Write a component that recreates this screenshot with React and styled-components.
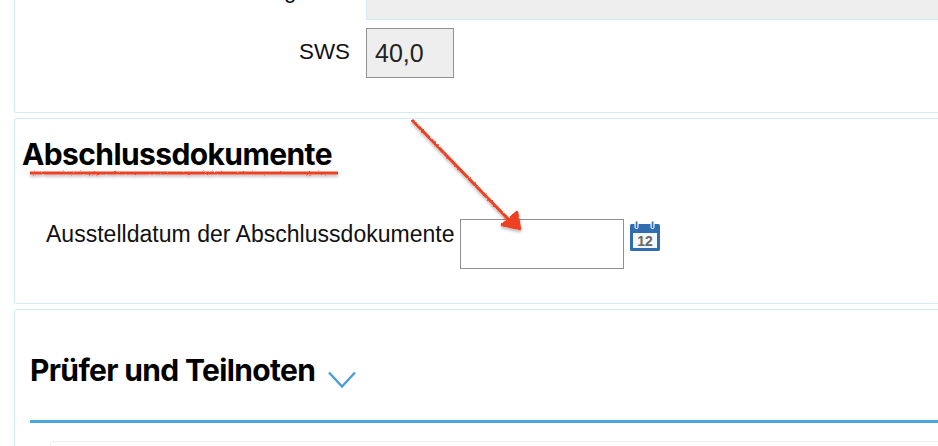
import React from "react";
import styled, { createGlobalStyle } from "styled-components";

const Global = createGlobalStyle`
  html, body { margin: 0; padding: 0; background: #fff; }
  body { font-family: "Liberation Sans", Arial, sans-serif; color: #111; overflow: hidden; }
`;

const Page = styled.div`
  position: relative;
  width: 938px;
  height: 446px;
  overflow: hidden;
`;

const Stack = styled.div`
  display: flex;
  flex-direction: column;
  gap: 5px;
  margin: -59px -20px 0 14px;
`;

const Panel = styled.section`
  box-sizing: border-box;
  border: 1px solid #d0ecf7;
  border-radius: 2px;
  background: #fff;
  padding: ${(p) => p.$pad};
  height: ${(p) => p.$h}px;
`;

const Grid = styled.div`
  display: grid;
  grid-template-columns: 335px 1fr;
  column-gap: 16px;
  row-gap: 8px;
`;

const RightLabel = styled.label`
  justify-self: end;
  font-size: 22.4px;
  line-height: 26px;
  margin-top: ${(p) => p.$top}px;
  color: #111;
`;

const Notes = styled.div`
  height: 78px;
  box-sizing: border-box;
  background: #eeeeee;
  border: 1px solid #d0ecf7;
  border-top: none;
  border-right: none;
`;

const ReadOnly = styled.div`
  box-sizing: border-box;
  width: 88px;
  height: 50px;
  background: #eeeeee;
  border: 1px solid #919191;
  font-size: 25px;
  line-height: 48px;
  padding-left: 8px;
  color: #222;
`;

const Heading = styled.h2`
  margin: 0;
  font-family: Inter, "Liberation Sans", sans-serif;
  font-weight: 700;
  font-size: ${(p) => p.$size}px;
  line-height: 36px;
  letter-spacing: ${(p) => p.$track}px;
  color: #000;
`;

const DateRow = styled.div`
  display: flex;
  align-items: flex-start;
  margin: 47px 0 0 24px;
`;

const DateLabel = styled.label`
  font-size: 23px;
  line-height: 26px;
  letter-spacing: 0.02px;
  margin: 2px 5px 0 0;
  color: #111;
`;

const DateInput = styled.div`
  box-sizing: border-box;
  width: 164px;
  height: 50px;
  background: #fff;
  border: 1px solid #8f8f8f;
`;

const CalendarButton = styled.span`
  display: block;
  margin: 2px 0 0 6px;
  height: 30px;
`;

const TitleRow = styled.div`
  display: flex;
  align-items: flex-start;
  gap: 13px;
  padding-bottom: 31px;
  border-bottom: 3px solid #4aa8df;
`;

const Chevron = styled.svg`
  display: block;
  margin-top: 19px;
`;

const SubCard = styled.div`
  height: 40px;
  margin: 18px 0 0 20px;
  border: 1px solid #efefef;
  border-radius: 3px;
`;

const Overlay = styled.svg`
  position: absolute;
  inset: 0;
  pointer-events: none;
`;

const CalendarIcon = () => (
  <svg width="30" height="30" viewBox="0 0 30 30">
    <rect x="0" y="3" width="30" height="27" rx="1.5" fill="#2f6cb0" />
    <rect x="3" y="12" width="24" height="15" fill="#f4f6f8" />
    <rect x="4.5" y="0" width="4" height="8" rx="2" fill="#fff" />
    <rect x="20.5" y="0" width="4" height="8" rx="2" fill="#fff" />
    <rect x="5.7" y="0.5" width="1.7" height="6.5" fill="#2f6cb0" />
    <rect x="21.7" y="0.5" width="1.7" height="6.5" fill="#2f6cb0" />
    <text x="15" y="25" textAnchor="middle" fontFamily="'Liberation Sans', sans-serif" fontWeight="700" fontSize="14" fill="#666">12</text>
  </svg>
);

export default function App() {
  return (
    <Page>
      <Global />
      <Stack>
        <Panel $h={172} $pad="0">
          <Grid>
            <RightLabel $top={36}>Anmerkung Note</RightLabel>
            <Notes />
            <RightLabel $top={11}>SWS</RightLabel>
            <ReadOnly>40,0</ReadOnly>
          </Grid>
        </Panel>
        <Panel $h={186} $pad="17px 0 0 7px">
          <Heading $size={30} $track={-0.6}>Abschlussdokumente</Heading>
          <DateRow>
            <DateLabel>Ausstelldatum der Abschlussdokumente</DateLabel>
            <DateInput />
            <CalendarButton><CalendarIcon /></CalendarButton>
          </DateRow>
        </Panel>
        <Panel $h={200} $pad="42px 0 0 15px">
          <TitleRow>
            <Heading $size={30} $track={-0.65}>Prüfer und Teilnoten</Heading>
            <Chevron width="28" height="18" viewBox="0 0 28 18">
              <path d="M1 1.5 L14 15.5 L27 1.5" fill="none" stroke="#4a9ed8" strokeWidth="2.4" />
            </Chevron>
          </TitleRow>
          <SubCard />
        </Panel>
      </Stack>
      <Overlay width="938" height="446" viewBox="0 0 938 446">
        <defs>
          <filter id="rough" x="-10%" y="-10%" width="120%" height="120%" filterUnits="objectBoundingBox">
            <feTurbulence type="fractalNoise" baseFrequency="0.35" numOctaves="2" seed="4" result="n" />
            <feDisplacementMap in="SourceGraphic" in2="n" scale="2.2" xChannelSelector="R" yChannelSelector="G" result="d" />
            <feDropShadow in="d" dx="0" dy="2" stdDeviation="1.4" floodColor="#000" floodOpacity="0.28" />
          </filter>
        </defs>
        <g filter="url(#rough)" fill="#ee4122" stroke="#ee4122" strokeLinejoin="round">
          <path d="M412 120 L510 221" fill="none" strokeWidth="3.2" />
          <path d="M502 225 L517 212 L520 229 Z" strokeWidth="2.5" />
          <path d="M30 173 H338" fill="none" strokeWidth="3" />
        </g>
      </Overlay>
    </Page>
  );
}
